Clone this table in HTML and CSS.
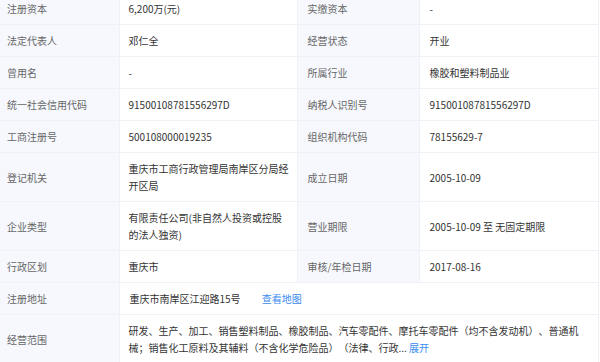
FILE: index.html
```html
<!DOCTYPE html>
<html lang="zh-CN">
<head>
    <meta charset="UTF-8">
    <meta name="viewport" content="width=device-width, initial-scale=1.0">
    <title>工商信息</title>
    <link rel="stylesheet" href="styles.css">
</head>
<body>
    <!-- Business registration info -->
    <div class="info-wrap">
        <table class="info-table">
            <colgroup>
                <col class="col-label">
                <col class="col-value">
                <col class="col-label2">
                <col class="col-value2">
            </colgroup>
            <tr>
                <td class="tb">注册资本</td>
                <td>6,200万(元)</td>
                <td class="tb">实缴资本</td>
                <td>-</td>
            </tr>
            <tr>
                <td class="tb">法定代表人</td>
                <td>邓仁全</td>
                <td class="tb">经营状态</td>
                <td>开业</td>
            </tr>
            <tr>
                <td class="tb">曾用名</td>
                <td>-</td>
                <td class="tb">所属行业</td>
                <td>橡胶和塑料制品业</td>
            </tr>
            <tr>
                <td class="tb">统一社会信用代码</td>
                <td>91500108781556297D</td>
                <td class="tb">纳税人识别号</td>
                <td>91500108781556297D</td>
            </tr>
            <tr>
                <td class="tb">工商注册号</td>
                <td>500108000019235</td>
                <td class="tb">组织机构代码</td>
                <td>78155629-7</td>
            </tr>
            <tr>
                <td class="tb">登记机关</td>
                <td>重庆市工商行政管理局南岸区分局经开区局</td>
                <td class="tb">成立日期</td>
                <td>2005-10-09</td>
            </tr>
            <tr>
                <td class="tb">企业类型</td>
                <td>有限责任公司(非自然人投资或控股的法人独资)</td>
                <td class="tb">营业期限</td>
                <td>2005-10-09 至 无固定期限</td>
            </tr>
            <tr>
                <td class="tb">行政区划</td>
                <td>重庆市</td>
                <td class="tb">审核/年检日期</td>
                <td>2017-08-16</td>
            </tr>
            <tr>
                <td class="tb">注册地址</td>
                <td colspan="3">重庆市南岸区江迎路15号 <a class="link map-link" href="#">查看地图</a></td>
            </tr>
            <tr>
                <td class="tb">经营范围</td>
                <td colspan="3" class="scope">研发、生产、加工、销售塑料制品、橡胶制品、汽车零配件、摩托车零配件（均不含发动机）、普通机械；销售化工原料及其辅料（不含化学危险品）（法律、行政... <a class="link" href="#">展开</a></td>
            </tr>
        </table>
    </div>
</body>
</html>
```

FILE: styles.css
```css
:root {
    --color-label-bg: #f6f8fd; /* label cells */
    --color-border: #eef1f6;
    --color-label: #666;
    --color-text: #333;
    --color-link: #3b8cf0;
    --font-family: "Noto Sans CJK SC", "Noto Sans", sans-serif;
}

* {
    box-sizing: border-box;
    margin: 0;
    padding: 0;
}

body {
    background: #fff;
    font-family: var(--font-family);
    font-size: 10px;
    color: var(--color-text);
    overflow: hidden;
    text-spacing-trim: space-all; /* keep full-width punctuation */
}

/* page is scrolled a little: first row is cut off */
.info-wrap {
    width: 598px;
    margin-top: -8px;
}

.info-table {
    width: 598px;
    border-collapse: collapse;
    table-layout: fixed;
    border-right: 1px solid var(--color-border);
}

.col-label { width: 119px; }
.col-value { width: 178px; }
.col-label2 { width: 122px; }
.col-value2 { width: 179px; }

.info-table td {
    padding: 7px 8px 7px 9px;
    line-height: 17px;
    border: 1px solid var(--color-border);
    vertical-align: middle;
    word-break: break-all;
}

.info-table td:last-child {
    padding-left: 10px;
}

.info-table td.tb {
    background: var(--color-label-bg);
    color: var(--color-label);
    padding-left: 10px;
}

.info-table td.tb:first-child {
    border-left: none;
    padding-left: 7px;
}

.info-table td.scope {
    padding-left: 9px;
}

.link {
    color: var(--color-link);
    text-decoration: none;
}

.map-link {
    margin-left: 19px;
}
```
